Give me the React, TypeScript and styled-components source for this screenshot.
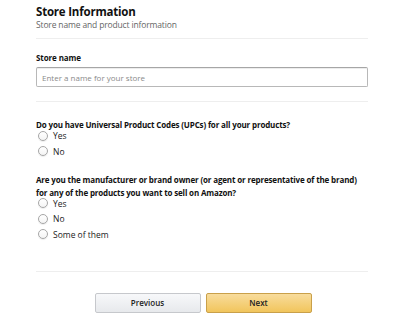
import React from "react";
import styled, {createGlobalStyle} from "styled-components";

const GlobalStyle = createGlobalStyle`
  html, body {
    margin: 0;
    padding: 0;
    background: #ffffff;
  }

  body {
    font-family: "Open Sans", "Noto Sans", sans-serif;
    color: #111111;
  }
`

export const Page = styled.div`
  width: 405px;
  height: 334px;
  box-sizing: border-box;
  padding: 4px 37px 0 36px;
  overflow: hidden;
`

export const Header = styled.div`
  padding-bottom: 7px;
  border-bottom: 1px solid #eeeeee;
`

export const Title = styled.h1`
  margin: 0;
  font-size: 11.5px;
  line-height: 15px;
  font-weight: 700;
  letter-spacing: -0.2px;
`

export const Subtitle = styled.div`
  font-size: 8.5px;
  line-height: 12px;
  color: #666666;
  letter-spacing: -0.15px;
`

export const Section = styled.div<{ pad: string }>`
  padding: ${({pad}) => pad};
  border-bottom: 1px solid #eeeeee;
`

export const Label = styled.div`
  font-size: 8px;
  line-height: 12px;
  font-weight: 700;
  letter-spacing: -0.1px;
`

export const Input = styled.input`
  display: block;
  width: 100%;
  box-sizing: border-box;
  height: 20px;
  margin-top: 3px;
  padding: 0 5px;
  border: 1px solid #b8b8b8;
  border-top-color: #a6a6a6;
  border-radius: 2px;
  box-shadow: 0 1px 0 rgba(0, 0, 0, 0.07) inset;
  font-family: inherit;
  font-size: 8px;
  color: #111111;

  &::placeholder {
    color: #8a8a8a;
  }
`

export const Question = styled.div`
  font-size: 8px;
  line-height: 13px;
  font-weight: 700;
  letter-spacing: -0.15px;
`

export const Options = styled.div`
  display: flex;
  flex-direction: column;
  gap: 4.5px;
  margin-top: -1px;
  margin-bottom: 16px;

  &:last-child {
    margin-bottom: 0;
  }
`

export const Option = styled.label`
  display: flex;
  align-items: center;
  gap: 5px;
  height: 11px;
  padding-left: 2px;
  font-size: 8.5px;
  color: #222222;
`

export const Radio = styled.span`
  width: 10px;
  height: 10px;
  box-sizing: border-box;
  border-radius: 50%;
  border: 1px solid #a6a6a6;
  background: linear-gradient(#ffffff, #f4f4f4);
  box-shadow: 0 1px 1px rgba(0, 0, 0, 0.08);
`

export const Footer = styled.div`
  display: flex;
  justify-content: center;
  gap: 5px;
  padding-top: 21px;
  padding-left: 2px;
`

export const Button = styled.button<{ primary?: boolean }>`
  width: 106px;
  height: 20px;
  border-radius: 2px;
  border: 1px solid ${({primary}) => (primary ? "#c9a04a" : "#c6c8cc")};
  background: ${({primary}) =>
    primary
      ? "linear-gradient(#f8dc9c, #f1c55c)"
      : "linear-gradient(#f7f8fa, #e7e9ec)"};
  font-family: inherit;
  font-size: 8px;
  font-weight: 600;
  color: #222222;
  cursor: pointer;
`

const upcOptions = ["Yes", "No"];
const brandOptions = ["Yes", "No", "Some of them"];

const App = () => {
    return (
        <Page>
            <GlobalStyle/>
            <Header>
                <Title>Store Information</Title>
                <Subtitle>Store name and product information</Subtitle>
            </Header>

            <Section pad="13px 0 14px">
                <Label>Store name</Label>
                <Input placeholder="Enter a name for your store"/>
            </Section>

            <Section pad="16px 0 31px">
                <Question>Do you have Universal Product Codes (UPCs) for all your products?</Question>
                <Options>
                    {upcOptions.map((o) => (
                        <Option key={o}><Radio/>{o}</Option>
                    ))}
                </Options>

                <Question>
                    Are you the manufacturer or brand owner (or agent or representative of the brand)
                    for any of the products you want to sell on Amazon?
                </Question>
                <Options>
                    {brandOptions.map((o) => (
                        <Option key={o}><Radio/>{o}</Option>
                    ))}
                </Options>
            </Section>

            <Footer>
                <Button>Previous</Button>
                <Button primary>Next</Button>
            </Footer>
        </Page>
    );
};

export default App;
